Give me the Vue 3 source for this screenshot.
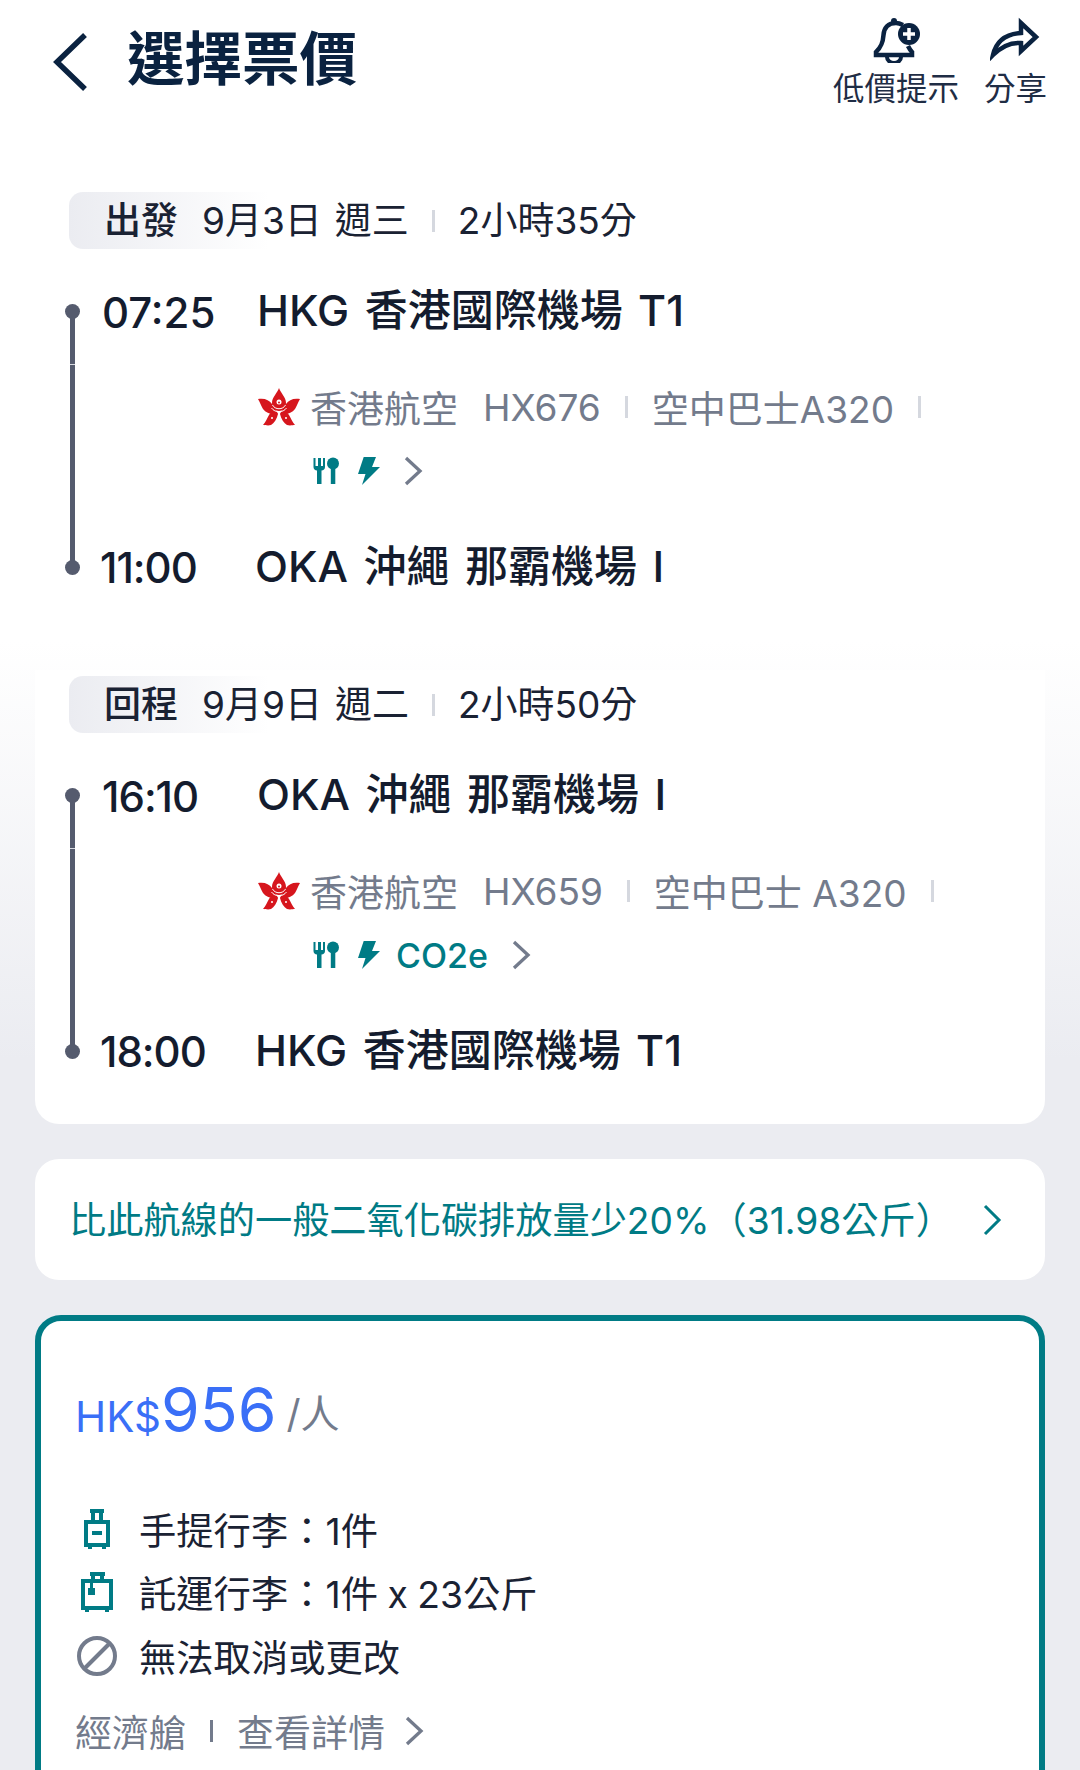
<script setup>
const legs = [
  {
    tag: '出發', date: '9月3日', day: '週三', dur: '2小時35分',
    dep: { t: '07:25', a: 'HKG 香港國際機場 T1' }, arr: { t: '11:00', a: 'OKA 沖繩 那霸機場 I' },
    flight: 'HX676', plane: '空中巴士A320', co2: false,
  },
  {
    tag: '回程', date: '9月9日', day: '週二', dur: '2小時50分',
    dep: { t: '16:10', a: 'OKA 沖繩 那霸機場 I' }, arr: { t: '18:00', a: 'HKG 香港國際機場 T1' },
    flight: 'HX659', plane: '空中巴士 A320', co2: true,
  },
]
</script>

<template>
  <div class="page">
    <header class="head">
      <svg class="back" width="36" height="60" viewBox="0 0 36 60"><path d="M33 3 L5 30 L33 57" fill="none" stroke="#0a2240" stroke-width="5.5"/></svg>
      <h1 class="title">選擇票價</h1>
      <div class="actions">
        <div class="action">
          <svg class="bell" width="50" height="46" viewBox="0 0 50 46">
            <path d="M23 6 C15 6 11 11 10.500 18 C10 26 8 30 3 35 L3 38 H39 L39 35 C37 33 36 31 35 29" fill="none" stroke="#0a2240" stroke-width="4.500"/>
            <path d="M23 6 C26 6 28 7 30 8" fill="none" stroke="#0a2240" stroke-width="4.500"/>
            <circle cx="21" cy="4" r="3" fill="#0a2240"/>
            <path d="M14 40 A7 6 0 0 0 28 40" fill="none" stroke="#0a2240" stroke-width="4"/>
            <circle cx="36" cy="17" r="11" fill="#0a2240"/>
            <path d="M30 17 H42 M36 11 V23" stroke="#fff" stroke-width="3.500"/>
          </svg>
          <span>低價提示</span>
        </div>
        <div class="action">
          <svg width="50" height="46" viewBox="0 0 50 46">
            <path d="M3 38 C6 25 15 17 31 16 L31 6 L46 20 L31 34 L31 26 C20 25 11 30 3 38 Z" fill="none" stroke="#0a2240" stroke-width="4.500" stroke-linejoin="miter"/>
          </svg>
          <span>分享</span>
        </div>
      </div>
    </header>

    <main class="content">
      <section class="flights">
        <div v-for="(l, i) in legs" :key="i" class="leg">
          <div class="tagrow">
            <div class="tagbox">
              <b class="tag">{{ l.tag }}</b>
              <span>{{ l.date }}</span>
              <span class="day">{{ l.day }}</span>
            </div>
            <i class="sep light"></i>
            <span>{{ l.dur }}</span>
          </div>
          <div class="route">
            <div class="rail"><i class="dot"></i><i class="line"></i><i class="dot"></i></div>
            <div class="stops">
              <div class="stop">
                <span class="time" :class="{ tight: l.dep.t.includes('1') }">{{ l.dep.t }}</span>
                <span class="port">{{ l.dep.a }}</span>
              </div>
              <div class="carrier">
                <svg class="logo" width="42" height="38" viewBox="0 0 42 38">
                  <g fill="#d6161d">
                    <path d="M21 0 C22.500 5 28 9 28 15 C28 20 25 23 21 23 C17 23 14 20 14 15 C14 9 19.500 5 21 0 Z"/>
                    <path d="M0 11 C7 10 11 12 14 16 C16 20 19 23 20 26 C13 27 8 25 5 21 C3 18 2 14 0 11 Z"/>
                    <path d="M42 11 C35 10 31 12 28 16 C26 20 23 23 22 26 C29 27 34 25 37 21 C39 18 40 14 42 11 Z"/>
                    <path d="M5 37 C8 34 9 30 11 27 C13 24 17 24 20 26 C19 31 16 35 13 37 C10 38 7 37 5 37 Z"/>
                    <path d="M37 37 C34 34 33 30 31 27 C29 24 25 24 22 26 C23 31 26 35 29 37 C32 38 35 37 37 37 Z"/>
                  </g>
                  <path d="M14.500 17 C17 22 25 22 27.500 17 M13.500 20 C17 25 25 25 28.500 20" fill="none" stroke="#fff" stroke-width="1"/>
                  <circle cx="21" cy="14" r="2.500" fill="#fff"/>
                  <circle cx="21" cy="14.500" r="1" fill="#d6161d"/>
                  <circle cx="14" cy="30" r="1" fill="#fff"/><circle cx="28" cy="30" r="1" fill="#fff"/>
                </svg>
                <div class="details">
                  <div class="info">
                    <span>香港航空</span><span class="fno">{{ l.flight }}</span><i class="sep light"></i><span>{{ l.plane }}</span><i class="sep light"></i>
                  </div>
                  <div class="extras">
                    <svg width="27" height="28" viewBox="0 0 27 28" fill="#007b85">
                      <path d="M0.500 1 V10 C0.500 12 2 13.500 4 13.500 V27 H8.500 V13.500 C10.500 13.500 12 12 12 10 V1 H10 V9 H8 V1 H5 V9 H2.500 V1 Z"/>
                      <circle cx="20" cy="6.500" r="6"/><rect x="17.800" y="12" width="4.500" height="15"/>
                    </svg>
                    <svg class="bolt" width="22" height="30" viewBox="0 0 22 30" fill="#007b85"><path d="M5.700 1 H18 L14 11 H22 L4 29 L7.500 18 H0 Z"/></svg>
                    <span v-if="l.co2" class="co2">CO2e</span>
                    <svg class="chev" width="19" height="30" viewBox="0 0 19 30"><path d="M2 2 L16 15 L2 28" fill="none" stroke="#737b8c" stroke-width="3.300"/></svg>
                  </div>
                </div>
              </div>
              <div class="stop end">
                <span class="time" :class="{ tight: l.arr.t.includes('1') }">{{ l.arr.t }}</span>
                <span class="port">{{ l.arr.a }}</span>
              </div>
            </div>
          </div>
        </div>
      </section>

      <section class="co2card">
        <span>比此航線的一般二氧化碳排放量少20%（31.98公斤）</span>
        <svg width="19" height="32" viewBox="0 0 19 32"><path d="M2 2 L16 16 L2 30" fill="none" stroke="#007b85" stroke-width="3"/></svg>
      </section>

      <section class="fare">
        <div class="price"><span class="cur">HK$</span><span class="amt">956</span><span class="per">/人</span></div>
        <ul class="perks">
          <li>
            <span class="ic"><svg width="26" height="40" viewBox="0 0 26 40" fill="none" stroke="#007b85" stroke-width="4">
              <path d="M6 2 H20 M9 2 V13 M17 2 V13" /><rect x="2" y="13" width="22" height="23"/><path d="M8 24 H18"/><path d="M6 36 V40 M20 36 V40"/>
            </svg></span>
            <span>手提行李：1件</span>
          </li>
          <li>
            <span class="ic"><svg width="32" height="40" viewBox="0 0 32 40" fill="none" stroke="#007b85" stroke-width="4">
              <path d="M9 2 H24 M12 2 V9 M21 2 V9" /><rect x="2" y="9" width="28" height="27"/><rect x="7" y="16" width="7" height="7" fill="#007b85" stroke="none"/><path d="M10.500 9 V20" stroke-width="3"/><path d="M6 36 V40 M26 36 V40"/>
            </svg></span>
            <span>託運行李：1件 x 23公斤</span>
          </li>
          <li>
            <span class="ic"><svg width="40" height="40" viewBox="0 0 40 40" fill="none" stroke="#737b8c" stroke-width="4">
              <circle cx="20" cy="20" r="18"/><path d="M7 33 L33 7"/>
            </svg></span>
            <span>無法取消或更改</span>
          </li>
        </ul>
        <div class="cabin">
          <span>經濟艙</span><i class="sep dark"></i><span>查看詳情</span>
          <svg class="chev2" width="19" height="30" viewBox="0 0 19 30"><path d="M2 2 L16 15 L2 28" fill="none" stroke="#737b8c" stroke-width="3.300"/></svg>
        </div>
      </section>
    </main>
  </div>
</template>

<style scoped>
.page {
  width: 1080px;
  height: 1770px;
  overflow: hidden;
  background: linear-gradient(#fff 0, #fff 640px, #ebecf1 1060px, #ebecf1 100%);
  font-family: Inter, "Noto Sans CJK TC", sans-serif;
  color: #1a2233;
  font-size: 37px;
}
.head {
  height: 116px;
  display: flex;
  align-items: flex-start;
  padding: 0 33px 0 52px;
  box-sizing: border-box;
}
.back { margin-top: 32px; flex: none; }
.title {
  margin: 26px 0 0 39px;
  font-size: 57.500px;
  line-height: 66px;
  font-weight: 700;
  color: #0a2240;
}
.actions { margin-left: auto; display: flex; gap: 25px; }
.action { display: flex; flex-direction: column; align-items: center; margin-top: 17px; }
.action span { font-size: 31.500px; line-height: 40px; color: #1f2d45; margin-top: 6px; }
.bell { margin-left: 4px; }
.content { padding: 0 35px; }
.flights {
  background: linear-gradient(transparent 554px, #fff 554px);
  border-radius: 24px;
  padding: 76px 0 34px;
  height: 1008px;
  box-sizing: border-box;
}
.leg { padding-left: 34px; }
.leg + .leg { margin-top: 81.500px; }
.tagrow { display: flex; align-items: center; height: 57px; }
.tagrow span { line-height: 57px; }
.tagbox {
  display: flex;
  border-radius: 14px;
  background: linear-gradient(90deg, #ebecf1, rgba(235,236,241,0) 200px);
  padding-left: 35px;
}
.tag {
  font-weight: 500;
  font-size: 37px;
  line-height: 57px;
  margin-right: 24px;
}
.day { margin-left: 13px; }
.sep { display: inline-block; flex: none; width: 3px; }
.sep.light { height: 22px; background: #d5d8df; margin: 0 24px; }
.tagrow .sep.light { margin: 0 23px; }
.sep.dark { height: 22px; background: #737b8c; margin: 0 24px; }
.route { display: flex; margin-top: 36px; }
.rail { width: 14px; display: flex; flex-direction: column; align-items: center; margin: 19px 0 20px -4px; flex: none; }
.dot { width: 15px; height: 15px; border-radius: 50%; background: #555b6e; flex: none; }
.line {
  width: 5px;
  flex: 1;
  margin: -2px 0;
  background: linear-gradient(#555b6e 47px, #d8dae0 47px, #d8dae0 48px, #555b6e 48px);
}
.stops { margin-left: 23px; }
.stop { display: flex; align-items: center; height: 54px; }
.stop.end { margin-left: -2px; }
.time { width: 155px; font-size: 42px; font-weight: 500; color: #141c2e; }
.time.tight { letter-spacing: -1px; }
.port { font-size: 43px; word-spacing: 4px; font-weight: 500; color: #141c2e; white-space: nowrap; margin-top: -10px; }
.carrier { display: flex; margin: 45px 0 0 155px; height: 156.500px; color: #737b8c; }
.logo { margin: 4px 0 0 1px; flex: none; }
.details { margin-left: 10px; }
.info { display: flex; align-items: center; height: 46px; white-space: nowrap; }
.fno { margin-left: 25px; }
.extras { display: flex; align-items: center; margin: 18px 0 0 3px; height: 46px; }
.bolt { margin-left: 18px; }
.co2 { color: #007b85; font-weight: 500; margin-left: 16px; font-size: 34px; }
.chev { margin-left: 24px; }
.co2card {
  margin-top: 35px;
  height: 121px;
  border-radius: 24px;
  background: #fff;
  display: flex;
  align-items: center;
  justify-content: space-between;
  padding: 0 43px 0 34px;
  color: #007b85;
  white-space: nowrap;
  font-size: 37.200px;
}
.co2card span { margin-top: -4px; }
.fare {
  margin-top: 35px;
  height: 600px;
  box-sizing: border-box;
  border: 6px solid #007b85;
  border-radius: 26px;
  background: #fff;
  padding: 48px 0 0 34px;
}
.price { display: flex; align-items: baseline; line-height: 80px; }
.cur { font-size: 42px; color: #3a6ff7; }
.amt { font-size: 62.500px; color: #3a6ff7; }
.per { margin-left: 10px; color: #737b8c; font-size: 39px; align-self: center; margin-top: 1px; }
.perks { list-style: none; margin: 40px 0 0; padding: 0; font-size: 37.300px; word-spacing: -1px; }
.perks li { display: flex; align-items: center; height: 63.500px; }
.ic { width: 42px; display: flex; justify-content: center; margin: 0 21px 0 1px; flex: none; }
.cabin { display: flex; align-items: center; height: 46px; margin-top: 20px; color: #737b8c; }
.chev2 { margin-left: 20px; }
</style>
